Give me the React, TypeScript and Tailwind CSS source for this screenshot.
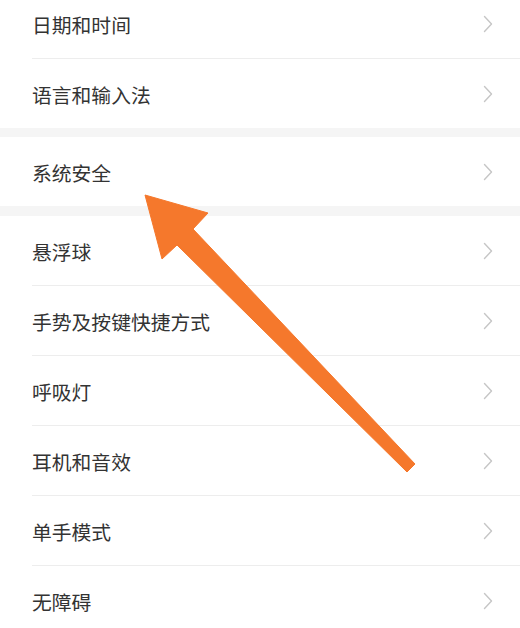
import React from "react";

const Chevron = () => (
  <svg width="10" height="18" viewBox="0 0 10 18" fill="none" className="shrink-0">
    <polyline points="1.5,1.5 8.5,9 1.5,16.5" stroke="#c6c6c6" strokeWidth="1.4" strokeLinecap="round" strokeLinejoin="round" />
  </svg>
);

const Row = ({ label, divider = false }: { label: string; divider?: boolean }) => (
  <div className="flex flex-col">
    <div className="h-[69px] flex items-center pl-[32px] pr-[27px]">
      <span className="flex-1 text-[19.8px] text-[#333333] leading-none pt-[3px]">{label}</span>
      <Chevron />
    </div>
    {divider && <div className="ml-[32px] h-px bg-[#ededed]" />}
  </div>
);

export default function App() {
  return (
    <div
      className="relative w-[520px] h-[628px] overflow-hidden bg-white"
      style={{ fontFamily: '"Noto Sans CJK SC", "Noto Sans", sans-serif' }}
    >
      <div className="-mt-[11px] flex flex-col">
        <Row label="日期和时间" divider />
        <Row label="语言和输入法" />
        <div className="h-[9px] bg-[#f5f5f5]" />
        <Row label="系统安全" />
        <div className="h-[10px] bg-[#f5f5f5]" />
        <Row label="悬浮球" divider />
        <Row label="手势及按键快捷方式" divider />
        <Row label="呼吸灯" divider />
        <Row label="耳机和音效" divider />
        <Row label="单手模式" divider />
        <Row label="无障碍" />
      </div>
      <svg
        className="absolute left-0 top-0 pointer-events-none"
        width="520"
        height="628"
        viewBox="0 0 520 628"
      >
        <polygon
          points="145,195 208,213 193,229 415,464 407,472 177,245 162,259"
          fill="#f5782c"
          stroke="#f5782c"
          strokeWidth="1"
          strokeLinejoin="round"
        />
      </svg>
    </div>
  );
}
